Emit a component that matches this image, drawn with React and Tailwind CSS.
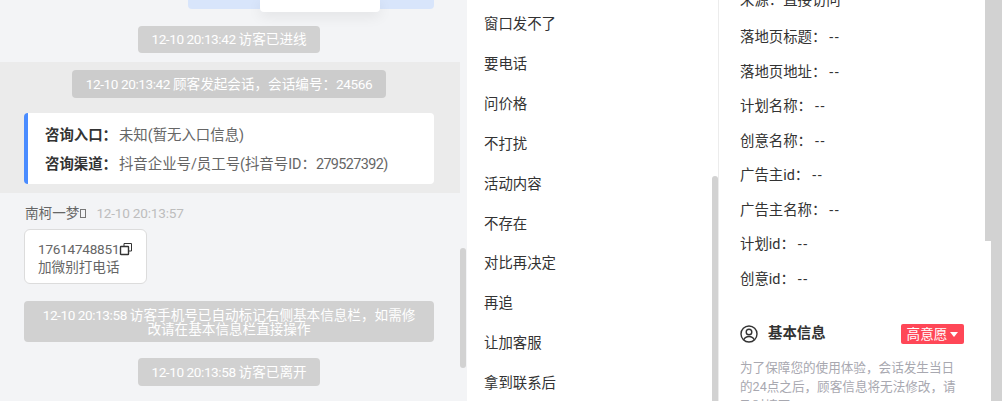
const cjk = "font-['Roboto','Noto_Sans_CJK_SC',sans-serif]";

// latin digits in the reference run narrower than Roboto, so they get negative tracking
function Num({ children }) {
  return <span className="tracking-[-0.42px]">{children}</span>;
}

function BodyNum({ children }) {
  return <span className="tracking-[-0.6px]">{children}</span>;
}

function Dash() {
  return <span className="ml-[3px] tracking-[1.5px]">--</span>;
}

function SystemNote({ children, className = "" }) {
  return (
    <div className={`ml-[138px] w-[182px] rounded-sm bg-[#d1d1d1] text-center text-[13.6px] text-white ${className}`}>
      {children}
    </div>
  );
}

const replies = ["窗口发不了", "要电话", "问价格", "不打扰", "活动内容", "不存在", "对比再决定", "再追", "让加客服", "拿到联系后"];

const fields = ["落地页标题：", "落地页地址：", "计划名称：", "创意名称：", "广告主id：", "广告主名称：", "计划id：", "创意id："];

function ChatColumn() {
  return (
    <div className="relative h-full w-[467px] shrink-0 overflow-hidden bg-[#f3f4f6]">
      <div className="ml-[188px] h-[9px] w-[246px]">
        <div className="relative h-[9px] rounded-b bg-[#d8e5fb]">
          <div className="absolute left-[72px] top-0 h-[12px] w-[120px] rounded-b bg-white shadow-[0_4px_14px_rgba(0,0,0,0.08)]" />
        </div>
      </div>
      <SystemNote className="mt-[17px] h-[27px] leading-[27px]"><Num>12-10 20:13:42 </Num>访客已进线</SystemNote>
      <div className="mt-[9px] h-[131px] w-[460px] bg-[#ebebeb] pt-[8px]">
        <div className="ml-[72px] h-[28px] w-[314px] rounded-sm bg-[#cccccc] text-center text-[13.6px] leading-[28px] text-white">
          <Num>12-10 20:13:42 </Num>顾客发起会话，会话编号：<Num>24566</Num>
        </div>
        <div className="ml-[24px] mt-[15px] flex h-[71px] w-[410px] flex-col justify-center gap-[7px] rounded-sm border-l-4 border-[#4a8cff] bg-white pl-[17px] pt-[4px] text-[14.4px] leading-[22px] text-[#666666]">
          <div><span className="font-bold text-[#333333]">咨询入口：</span><span className="ml-[2px]">未知(暂无入口信息)</span></div>
          <div><span className="font-bold text-[#333333]">咨询渠道：</span><span className="ml-[2px]">抖音企业号/员工号(抖音号ID：<BodyNum>279527392</BodyNum>)</span></div>
        </div>
      </div>
      <div className="ml-[25px] mt-[10px] flex h-[20px] items-center text-[13.6px]">
        <span className="text-[#666666]">南柯一梦</span>
        <span className="ml-[1px] inline-block h-[9px] w-[6px] border border-[#777777]" />
        <span className="ml-[10px] tracking-[-0.2px] text-[#bdbdbd]">12-10 20:13:57</span>
      </div>
      <div className="ml-[24px] mt-[6px] h-[55px] w-[123px] rounded-md border border-[#dcdcdc] bg-white pl-[13px] pt-[10px] text-[13.6px] leading-[18px] text-[#666666]">
        <div className="flex items-center">
          <span className="tracking-[-0.25px]">17614748851</span>
          <svg width="14" height="14" viewBox="0 0 14 14" fill="none" stroke="#333">
            <path d="M5 4V1.5h7.5V9H10" strokeWidth="1" />
            <rect x="1.5" y="4.5" width="8" height="8" rx="0.5" strokeWidth="1.4" />
          </svg>
        </div>
        <div>加微别打电话</div>
      </div>
      <div className="ml-[24px] mt-[17px] h-[41px] w-[410px] rounded-sm bg-[#d1d1d1] px-[16px] pt-[7px] text-center text-[13.6px] leading-[14px] text-white">
        <Num>12-10 20:13:58 </Num>访客手机号已自动标记右侧基本信息栏，如需修改请在基本信息栏直接操作
      </div>
      <SystemNote className="mt-[16px] h-[28px] leading-[28px]"><Num>12-10 20:13:58 </Num>访客已离开</SystemNote>
      <div className="absolute right-[1px] top-[248px] h-[120px] w-[6px] rounded-full bg-[#d2d2d2]" />
    </div>
  );
}

function ReplyColumn() {
  return (
    <div className="relative h-full w-[251px] shrink-0 overflow-hidden bg-white pl-[17px] pt-[5px] text-[14.4px] text-[#333333]">
      {replies.map((r) => (
        <div key={r} className="flex h-[39.9px] items-center">{r}</div>
      ))}
      <div className="absolute right-0 top-[176px] h-[225px] w-[6px] rounded-t bg-[#d2d2d2]" />
    </div>
  );
}

function InfoColumn() {
  return (
    <div className="relative h-full flex-1 overflow-hidden border-l border-[#ececec] bg-white pl-[21px] text-[14.4px] text-[#333333]">
      <div className="-mt-[9px] flex h-[20px] items-center">来源：直接访问</div>
      <div className="mt-[10px] flex flex-col">
        {fields.map((f) => (
          <div key={f} className="flex h-[34.5px] items-center">{f}<Dash /></div>
        ))}
      </div>
      <div className="mt-[27px] flex h-[20px] w-[224px] items-center justify-between">
        <div className="flex items-center gap-[10px]">
          <svg width="18" height="18" viewBox="0 0 18 18" fill="none" stroke="#333" strokeWidth="1.4">
            <circle cx="9" cy="9" r="8" />
            <circle cx="9" cy="7" r="2.8" />
            <path d="M3.8 14.8c1-2.2 3-3.3 5.2-3.3s4.2 1.1 5.2 3.3" />
          </svg>
          <span className="font-bold">基本信息</span>
        </div>
        <div className="flex h-[20px] w-[63px] items-center justify-center gap-[3px] rounded-[2px] bg-[#ff4757] text-[13.6px] text-white">
          高意愿
          <svg width="8" height="5" viewBox="0 0 8 5" fill="#fff"><path d="M0 0h8L4 5z" /></svg>
        </div>
      </div>
      <div className="mt-[14px] w-[224px] text-[12.6px] leading-[19px] text-[#a8a8b0]">
        为了保障您的使用体验，会话发生当日的24点之后，顾客信息将无法修改，请及时填写
      </div>
      <div className="absolute right-0 top-0 h-[241px] w-[17px] bg-[#d2d2d2]" />
      <div className="absolute bottom-0 right-0 top-[241px] w-[11px] bg-[#d2d2d2]" />
    </div>
  );
}

export default function App() {
  return (
    <div className={`flex h-[401px] w-[1002px] overflow-hidden ${cjk}`}>
      <ChatColumn />
      <ReplyColumn />
      <InfoColumn />
    </div>
  );
}
